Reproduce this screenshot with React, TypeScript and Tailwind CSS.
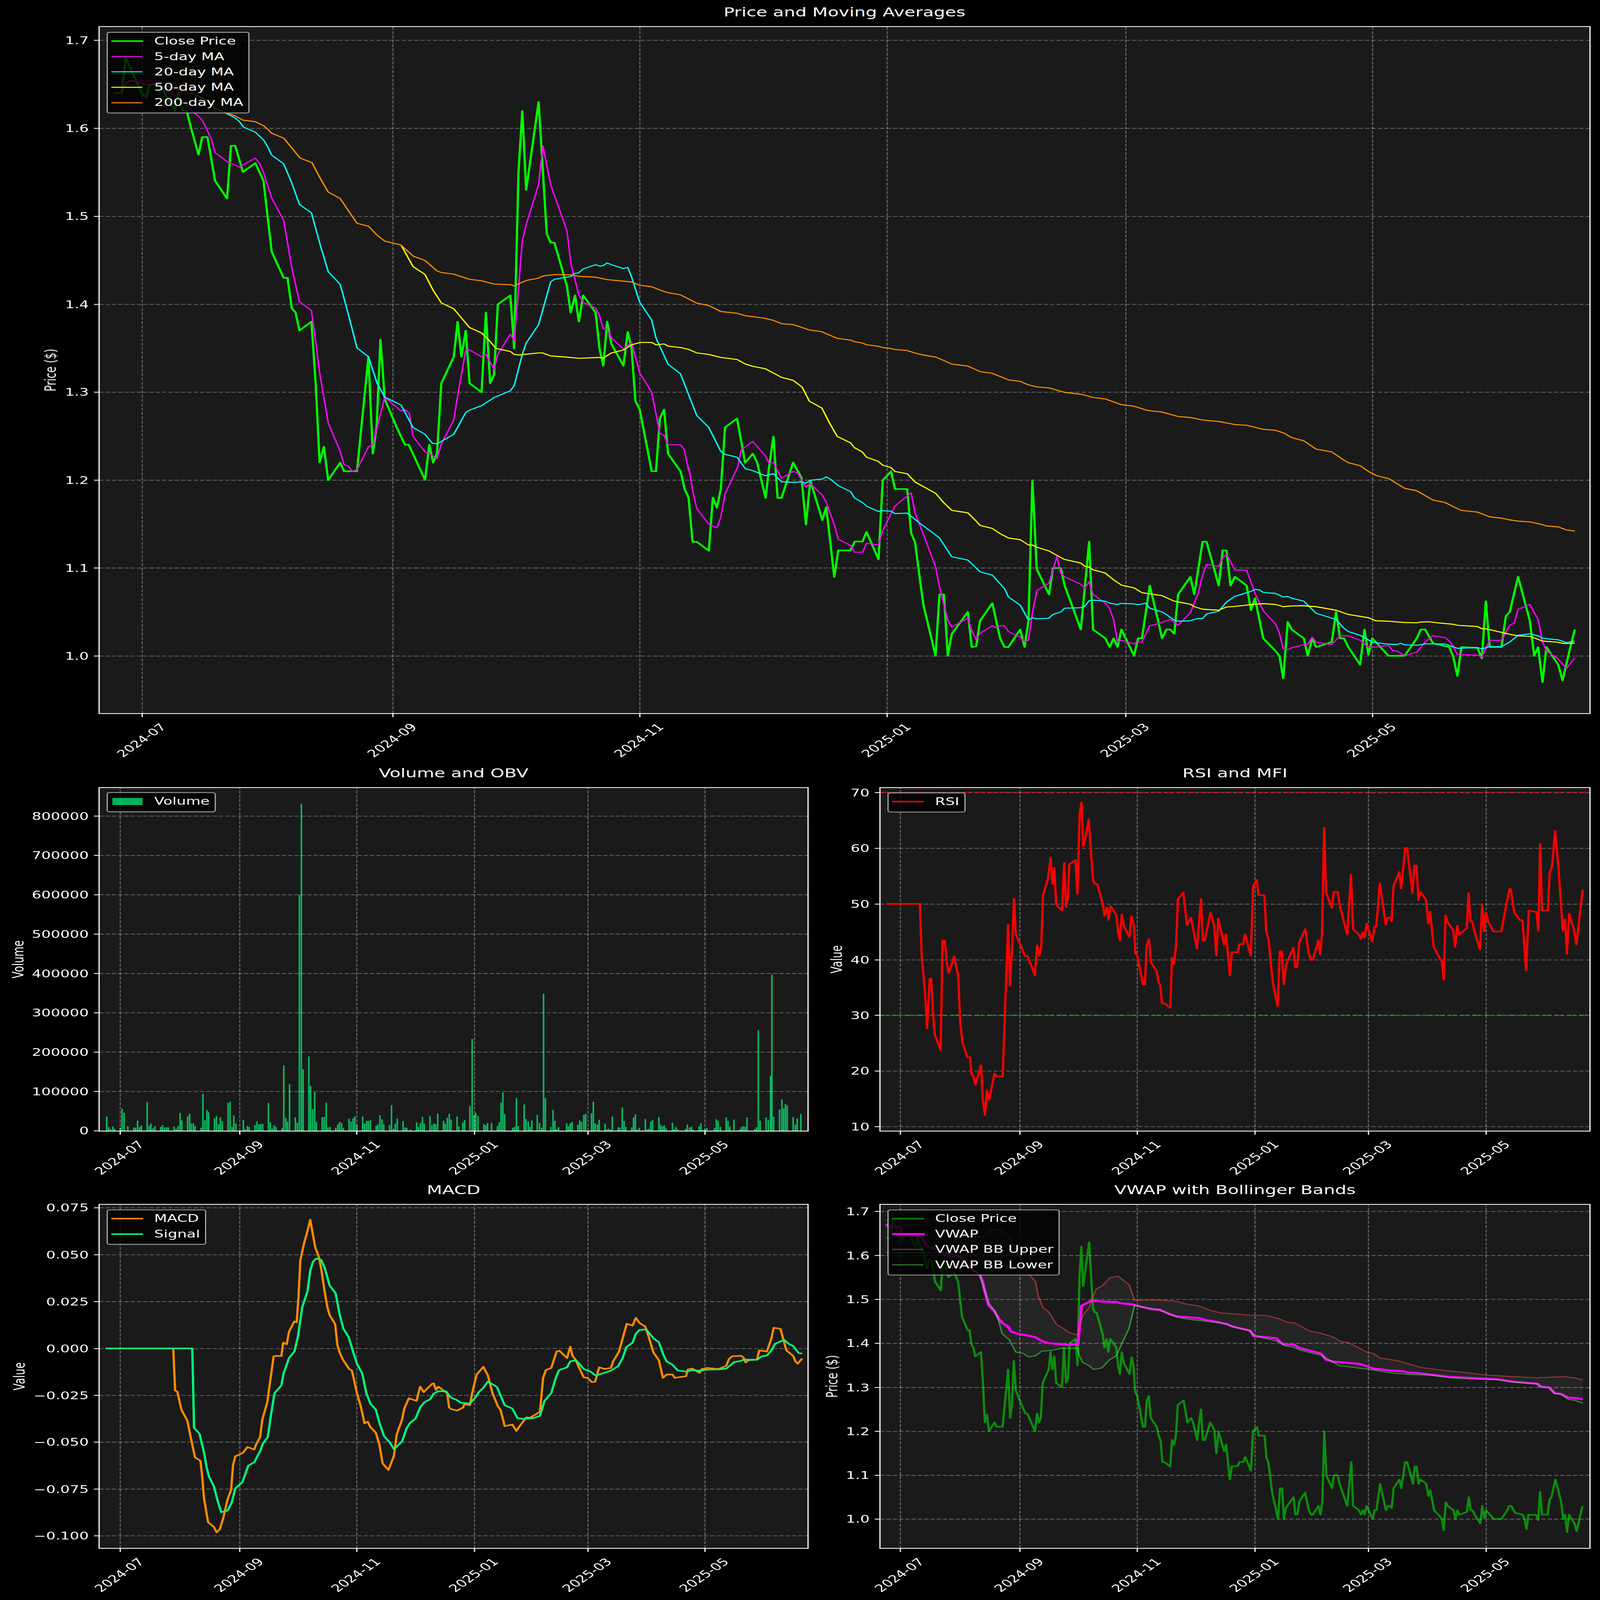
import type { ReactNode } from 'react';

// reads taken from the crops, as flat x,y lists, mapped back to page pixels
const toPage = (ox: number, oy: number, sx: number, sy: number, a: number[]) => {
  const out: number[] = [];
  for (let i = 0; i < a.length; i += 2) out.push(ox + a[i] / sx, oy + a[i + 1] / sy);
  return out;
};
const z1 = (a: number[]) => toPage(0, 0, 1.568, 2.24, a);
const z6 = (a: number[]) => toPage(277, 108, 0.7467, 0.825, a);
const z7 = (a: number[]) => toPage(2300, 1300, 0.7317, 0.98, a);
const z12 = (a: number[]) => toPage(1800, 1900, 2.24, 3, a);
const zRight = (y: number, a: number[]) => toPage(2459, y, 0.7903, 1.12, a);
const zLeft = (y: number, a: number[]) => toPage(277, y, 0.7915, 1.12, a);

const CLOSE = [
  ...z1([497,848,533,848,551,525,580,660,620,845,640,890,657,768,700,768,730,880,765,1010,782,845,800,1008,818,1008,835,1150,870,1410]),
  ...z6([215,371,226,371,242,518,267,577,275,400,284,400,300,488,326,458,343,518,360,755,385,843,393,843,402,945,410,960,418,1020,443,990,452,1200,460,1462,469,1410,478,1522,503,1463,511,1492,538,1492,562,1108,571,1433,579,1345,587,1050,596,1250,621,1345,638,1403,646,1403,680,1521,689,1403,697,1463,705,1433,714,1197,740,1108,748,990,756,1108,765,1020,773,1197,798,1227,807,960,816,1197,824,1168,832,932,858,902,866,1080,875,490,883,283,891,548,917,253,934,695,942,725,950,725,976,870,984,960,993,902,1001,990,1010,902,1036,960,1044,1080,1052,1138,1060,990,1069,1065,1094,1138,1103,1025,1111,1080,1119,1256,1128,1285,1153,1492,1162,1492,1170,1315,1179,1285,1187,1433,1213,1492]),
  ...z12([228,45,253,265,278,372,303,910,329,910,405,1020,430,370,455,495,480,265]),
  ...z6([1306,1345,1331,1315,1348,1463,1364,1433,1373,1463]),
  ...z12([760,375,782,0]),
  ...z6([1407,1375]),
  ...z12([835,375,860,375]),
  ...z6([1448,1463]),
  ...z12([985,130,1013,700,1040,160,1115,645,1140,487,1190,1340,1215,1015,1292,1015,1318,907,1367,907,1392,790,1467,1125]),
  ...z7([122,640,139,605,147,675,172,675,180,850,188,887,197,1020,205,1135,230,1340,238,1095,247,1095,255,1340,263,1253,296,1165,304,1305,313,1302,321,1200,346,1130,362,1270,371,1305,379,1305,403,1235,412,1305,420,1200,428,640,437,995,462,1095,470,990,486,990,494,1060,527,1235,544,885,552,1235,577,1270,586,1305,594,1270,602,1305,610,1235,636,1340,644,1270,652,1270,668,1060,685,1200,693,1270,702,1235,710,1235,718,1252,726,1095,751,1025,759,1095,776,885,784,885,809,1060,817,920,825,920,833,1060,842,1025,866,1060,875,1158,883,1110,900,1270,925,1320,933,1340,941,1430,950,1205,958,1235,983,1270,991,1340,1000,1270,1008,1305,1040,1285,1049,1165,1057,1270,1065,1270,1074,1305,1098,1375,1107,1235,1115,1335,1123,1270,1156,1340,1189,1340,1214,1270,1222,1235,1231,1235,1247,1290,1280,1305,1288,1340,1297,1420,1305,1305,1338,1308,1347,1350,1355,1122,1363,1305,1387,1305,1396,1182,1404,1165,1421,1025,1445,1200,1454,1340,1462,1305,1471,1445,1479,1305,1503,1375,1512,1438,1528,1305,1537,1235]),
];

const MA5 = [
  ...z1([497,848,533,848,551,768,569,735,620,735,640,745,657,728,680,755,730,825,765,872,782,865,800,930,835,1000,870,1060,888,1100,925,1260,942,1390,995,1472,1048,1522,1118,1440]),
  ...z6([335,460,343,490,360,575,385,650,393,725,402,810,418,923,443,953,452,1060,460,1160,478,1330,503,1425,511,1470,520,1475,528,1492,538,1487,562,1410,571,1403,580,1345,596,1243,630,1290,638,1285,647,1297,655,1375,680,1427,689,1432,705,1450,714,1400,740,1320,748,1240,765,1085,773,1085,798,1108,807,1100,824,1150,832,1100,858,1032,866,1055,875,880,883,720,891,665,917,530,926,400,942,530,976,685,985,800,1001,900,1010,925,1036,945,1044,970,1052,1015,1060,1015,1069,1045,1094,1082,1111,1060,1128,1162,1153,1227,1170,1365,1179,1372,1187,1403,1213,1403,1221,1420,1230,1490]),
  ...z12([280,0,303,280,329,505,405,695,455,740,480,610,506,330,585,0]),
  ...z6([1340,1420,1364,1392,1390,1440,1398,1465,1407,1463]),
  ...z12([860,135,935,50,960,72,1013,245,1040,200,1115,340,1140,430,1190,700,1215,880,1292,955,1318,1038,1367,1038,1392,927,1467,950]),
  ...z7([122,840,147,743,180,690,188,770,205,855,230,985,238,1065,247,1135,255,1197,263,1225,296,1190,304,1240,313,1275,321,1250,346,1220,354,1228,362,1220,371,1220,379,1243,403,1265,412,1285,420,1277,428,1170,437,1080,462,1050,478,945,486,1010,494,1025,527,1055,535,1070,544,1045,552,1095,577,1130,586,1152,594,1195,602,1285,610,1278,636,1292,644,1285,652,1285,668,1220,685,1212,710,1195,726,1218,751,1168,767,1090,776,1020,784,975,809,983,817,950,825,935,842,998,866,998,883,1090,900,1160,925,1213,933,1250,941,1312,950,1315,958,1308,983,1295,991,1295,1000,1265,1008,1285,1040,1295,1057,1260,1074,1260,1098,1278,1115,1305,1132,1305,1156,1298,1165,1320,1173,1320,1189,1340,1214,1325,1231,1285,1247,1260,1272,1267,1280,1280,1288,1300,1297,1335,1338,1337,1347,1345,1363,1278,1387,1278,1404,1218,1413,1210,1421,1155,1445,1135,1462,1195,1471,1285,1479,1320,1503,1352,1520,1390,1537,1348]),
];

const MA20 = [
  ...z1([960,1005,990,1030,1030,1075,1048,1105,1067,1158,1118,1203,1155,1275,1175,1345,1190,1412,1243,1492]),
  ...z6([402,525,418,597,443,625,460,725,478,822,503,865,520,965,538,1078,562,1108,580,1197,596,1243,630,1270,655,1345,680,1368,695,1398,705,1400,740,1368,765,1295,773,1287,798,1272,824,1245,858,1222,866,1205,883,1100,891,1062,917,1000,942,857,950,848,985,838,993,828,1001,826,1010,813,1036,799,1044,804,1052,802,1060,793,1069,799,1094,812,1103,808,1111,840,1128,925,1153,985,1162,1045,1187,1133,1213,1165,1247,1305,1272,1345,1297,1425,1306,1435,1331,1445,1348,1483,1364,1490,1390,1507,1407,1500]),
  ...z12([860,178,940,185,985,178,1013,195,1040,158,1115,145,1140,118,1165,145,1215,225,1292,298,1317,375,1365,430,1395,478,1467,540,1492,530,1545,537]),
  ...z7([147,773,172,771,197,810,238,870,263,945,296,958,321,1005,346,1018,371,1072,379,1105,403,1138,420,1197,428,1188,437,1192,462,1190,470,1175,486,1165,494,1150,527,1148,535,1143,544,1120,552,1118,577,1122,586,1130,602,1135,610,1131,636,1133,644,1136,660,1130,668,1150,693,1165,702,1175,718,1198,726,1202,751,1200,759,1195,767,1191,776,1191,784,1173,809,1162,825,1125,842,1103,875,1083,883,1075,892,1077,900,1087,925,1091,941,1105,950,1103,958,1110,983,1122,1008,1170,1049,1195,1065,1230,1074,1243,1098,1258,1123,1285,1148,1292,1173,1295,1181,1290,1189,1296,1214,1298,1231,1292,1247,1292,1272,1293,1297,1310,1338,1307,1347,1312,1363,1303,1387,1303,1404,1285,1421,1258,1445,1252,1462,1260,1471,1270,1503,1276,1520,1287,1537,1281]),
];

const MA50 = [
  ...z6([630,733,655,805,680,832,697,885,714,927,740,947,773,1010,798,1028,815,1055,828,1080,858,1090,866,1100,875,1102,917,1095,925,1095,942,1105,975,1109,1001,1113,1044,1110,1052,1112,1069,1095,1094,1085,1111,1068,1128,1060,1153,1060,1162,1068,1179,1065,1187,1072,1213,1077,1230,1083,1247,1095,1272,1100,1297,1110,1331,1117,1348,1132,1364,1140,1390,1148,1424,1177,1448,1187,1467,1210,1482,1257,1508,1280,1524,1330,1540,1375,1568,1397]),
  ...z7([64,510,80,527,89,548,113,565,122,580,139,590,147,605,172,614,188,647,230,692,247,730,263,760,296,770,313,803,321,820,346,832,362,853,379,870,403,877,420,898,428,898,437,907,462,922,486,948,494,956,527,970,535,983,544,986,552,997,577,1010,594,1037,610,1058,636,1069,652,1088,693,1100,718,1122,751,1134,759,1144,776,1154,809,1158,825,1145,842,1143,883,1134,900,1132,925,1135,941,1144,958,1141,983,1140,991,1142,1008,1144,1049,1158,1074,1175,1115,1188,1130,1200,1156,1202,1189,1207,1214,1208,1222,1205,1239,1204,1255,1208,1288,1214,1297,1218,1338,1223,1347,1232,1355,1232,1404,1254,1421,1260,1445,1262,1471,1281,1503,1286,1512,1290,1520,1291,1537,1289]),
];

const MA200 = [
  ...z1([497,848,533,848,551,768,569,735,620,755,640,773,700,773,730,790,765,808,785,815,870,875,905,915,925,950,940,985,990,1028,1030,1055,1065,1095,1118,1108,1155,1145,1170,1172,1190,1213,1243,1258,1315,1440,1367,1482]),
  ...z6([460,505,478,555,503,577,538,660,562,670,580,700,596,720,630,733,655,770,680,785,705,820,714,825,740,831,773,848,798,853,824,864,858,866,866,870,891,852,917,844,926,837,950,832,985,833,1001,838,1036,841,1060,849,1111,857,1128,868,1153,873,1170,884,1187,893,1213,900,1247,928,1272,936,1297,956,1331,962,1348,970,1390,979,1407,986,1424,997,1448,1000,1482,1018,1508,1024,1540,1046,1568,1052]),
  ...z7([64,88,80,93,89,100,113,106,122,111,139,115,147,119,172,123,188,133,205,141,230,149,247,163,263,177,296,185,321,207,346,214,379,240,403,246,420,260,437,268,462,272,494,290,527,297,552,310,577,316,610,339,636,345,660,360,668,363,693,368,726,386,751,390,776,400,809,406,842,418,866,421,900,437,925,441,941,451,958,470,983,483,1008,516,1040,527,1065,560,1074,570,1098,582,1115,605,1132,622,1156,633,1189,672,1214,682,1247,719,1272,729,1304,760,1338,767,1363,786,1387,791,1404,798,1421,803,1445,806,1462,813,1479,822,1503,826,1520,838,1537,843]),
];

const RSI = zRight(3203, [14,530,88,530,92,760,100,950,104,1097,110,870,113,870,117,1020,121,1125,134,1195,138,697,143,697,148,805,152,845,164,768,173,865,177,1065,182,1160,193,1228,199,1228,202,1303,206,1315,211,1354,223,1265,227,1420,232,1492,236,1378,241,1423,253,1302,258,1316,271,1316,279,850,283,625,287,903,292,720,296,506,300,670,312,725,320,767,326,767,342,855,347,718,352,767,356,725,360,490,371,415,377,318,381,440,385,365,389,533,402,560,407,343,411,545,415,500,418,350,432,330,436,485,441,120,445,68,449,268,453,235,461,145,467,325,471,428,476,440,480,440,492,530,496,584,501,545,505,603,509,540,522,580,526,660,530,697,534,578,539,632,551,681,555,586,561,630,564,755,568,765,581,897,585,897,589,718,594,690,598,795,611,835,615,885,619,900,623,983,628,983,641,1003,645,775,649,803,654,720,658,507,670,478,678,627,687,592,700,733,709,507,713,697,717,697,730,570,738,627,743,765,747,597,760,715,764,668,773,857,777,750,790,750,794,713,802,713,806,668,819,765,824,450,832,420,836,490,849,490,853,655,858,690,864,820,868,890,878,997,883,745,887,745,892,897,897,805,913,730,917,820,921,818,926,705,939,645,947,755,952,785,956,785,968,695,972,760,976,675,981,183,985,478,998,548,1002,475,1011,475,1015,535,1032,670,1040,397,1045,645,1058,670,1062,690,1066,660,1070,685,1075,620,1087,702,1092,633,1096,633,1104,435,1117,625,1121,592,1126,592,1130,610,1134,450,1147,385,1151,460,1160,275,1164,275,1176,482,1180,355,1185,355,1189,512,1194,475,1206,512,1211,620,1215,565,1219,650,1223,727,1241,795,1245,876,1249,582,1254,615,1266,650,1270,725,1275,628,1279,670,1296,640,1300,480,1304,610,1308,610,1313,655,1325,738,1330,535,1334,655,1338,568,1343,610,1355,656,1372,656,1390,462,1393,462,1401,570,1414,605,1419,605,1427,833,1433,560,1450,567,1454,652,1458,256,1462,560,1475,560,1479,388,1484,362,1491,197,1499,380,1508,652,1513,600,1517,757,1522,574,1533,650,1538,715,1547,550,1552,465]);

const MACD = zLeft(4898, [14,656,164,656,168,848,173,853,182,935,195,985,203,1065,212,1152,224,1168,228,1240,232,1340,241,1448,254,1470,260,1494,267,1480,275,1425,284,1345,292,1300,296,1190,301,1148,318,1132,328,1105,343,1117,348,1090,356,1060,361,980,372,900,378,810,386,692,390,690,403,691,407,630,415,637,420,580,432,533,437,537,441,420,445,255,453,180,461,120,467,70,473,140,478,195,486,240,491,290,499,400,505,470,510,505,522,545,527,640,532,675,540,710,553,750,559,757,565,810,570,860,578,915,582,950,587,998,594,990,600,1015,612,1040,620,1095,627,1180,640,1210,652,1145,658,1050,670,980,675,930,685,883,702,895,710,830,718,855,736,818,740,815,745,845,750,830,770,860,774,925,779,933,792,939,805,925,808,910,820,915,825,860,835,775,850,740,860,780,870,860,882,920,888,937,897,1010,914,1003,923,1032,930,1010,945,970,953,972,975,945,982,790,988,755,1000,745,1012,670,1018,667,1035,700,1042,648,1047,690,1053,705,1063,750,1072,788,1080,790,1090,810,1097,808,1106,742,1118,750,1132,745,1137,715,1150,670,1162,580,1167,544,1180,552,1187,517,1195,540,1208,557,1215,600,1226,675,1238,710,1247,790,1255,775,1268,775,1273,790,1298,783,1302,752,1312,748,1328,768,1333,750,1345,745,1370,750,1387,735,1393,705,1400,692,1420,690,1425,697,1430,720,1437,710,1455,707,1460,665,1477,670,1487,610,1492,562,1507,567,1512,605,1520,665,1535,690,1540,715,1545,726,1555,702]);

const SIGNAL = zLeft(4898, [14,656,206,656,210,1018,222,1045,232,1130,238,1200,243,1240,254,1285,262,1350,270,1402,284,1395,293,1360,301,1295,317,1265,330,1190,343,1175,357,1120,362,1090,373,1060,380,960,388,860,403,825,408,770,420,700,432,670,440,600,449,470,461,395,467,300,473,262,480,247,491,252,499,290,510,370,523,405,532,500,540,565,552,605,560,660,570,725,582,770,591,860,600,908,612,935,620,995,630,1055,643,1085,652,1115,660,1100,670,1080,680,1020,688,995,700,975,710,925,720,900,732,888,740,862,750,851,767,851,778,880,790,890,800,904,820,907,832,880,840,855,850,835,860,807,880,832,897,915,914,930,925,973,935,977,960,974,975,963,985,895,1000,860,1010,790,1017,755,1035,742,1042,715,1055,710,1072,750,1087,762,1098,780,1118,767,1132,757,1148,737,1158,700,1166,650,1180,630,1187,590,1195,572,1210,570,1227,612,1238,628,1247,680,1255,715,1268,730,1280,757,1300,762,1312,755,1330,758,1345,753,1370,752,1387,748,1405,718,1420,713,1425,707,1455,708,1465,693,1477,688,1487,665,1495,635,1515,617,1525,635,1535,645,1547,677,1555,680]);

const VWAP = zRight(4898, [14,90,20,103,45,103,50,142,75,143,93,152,104,192,130,210,140,220,175,236,205,300,220,318,227,355,232,400,240,460,252,485,262,520,270,540,283,557,290,580,305,590,320,595,343,605,360,625,372,632,415,640,437,637,445,462,467,439,497,443,523,445,530,450,555,455,580,468,600,478,618,480,640,500,655,510,705,518,720,527,745,535,765,545,778,556,818,575,825,600,840,603,875,610,890,637,915,640,925,653,975,680,985,708,1000,716,1040,723,1060,727,1090,748,1130,757,1155,760,1165,766,1185,768,1215,775,1255,785,1340,795,1360,796,1400,808,1440,815,1453,817,1458,830,1478,834,1490,860,1503,863,1520,880,1540,883,1552,888]);

const BB_UPPER = zRight(4898, [14,71,130,71,150,95,175,105,190,130,205,148,225,148,245,118,262,113,285,145,300,205,327,315,343,350,350,420,360,470,373,490,390,548,405,565,420,586,437,595,440,560,448,505,462,470,470,420,478,385,492,370,507,335,526,327,537,345,550,365,562,437,600,435,650,440,680,455,705,463,730,483,755,495,790,500,820,505,850,505,880,520,900,537,915,540,950,578,970,585,1000,603,1015,622,1035,630,1075,673,1090,680,1105,700,1145,713,1195,743,1240,755,1300,768,1340,778,1400,785,1453,790,1480,787,1510,785,1535,790,1552,800]);

const BB_LOWER = zRight(4898, [14,221,130,221,150,238,175,240,205,300,220,318,240,450,255,490,262,530,270,590,285,615,300,673,317,680,328,695,343,690,358,668,380,665,400,655,437,656,440,690,448,720,462,735,472,752,490,745,507,708,522,690,535,630,550,565,562,460,580,467,618,482,655,513,680,523,720,532,765,545,780,558,818,577,825,595,850,610,880,625,895,645,912,650,930,665,975,688,1000,718,1015,735,1075,750,1130,768,1170,775,1215,778,1260,790,1310,796,1360,798,1400,810,1450,817,1458,830,1478,836,1490,862,1505,866,1520,888,1535,893,1552,906]);

// same close series, rescaled from the top axes to the VWAP axes
const CLOSE_VWAP = CLOSE.map((v, i) =>
  i % 2 === 0 ? 2516 + (v - 397.5) * 0.47615 : 4926.6 + (v - 164) * 0.49976,
);

const VOLUME_BARS = [
  ...toPage(200, 4200, 1.425, 3, [140,1023,148,1150,155,1177,164,1144,171,1168,194,1159,201,925,209,975,224,1141,248,1156,255,1158,263,1072,271,1152,278,1129,301,844,309,1135,316,1108,324,1165,332,1141,355,1150,362,1129,370,1156,378,1153,385,1156,408,1144,416,1171,424,1138,432,979,439,1069,462,1018,470,988,477,1108,485,1105,492,1138,516,1159,523,745,531,1066,539,946,546,970,569,1042,577,1015,585,1117,592,1033,600,1078,623,856,631,841,639,1150,646,1009,654,1105,684,1066,691,1177,700,1138,707,1150,730,1126,738,1084,746,1117,753,1114,761,1111,784,856,791,1093,799,1168,807,1129,814,1150,838,1165,845,397,853,1039,860,1087,868,628,891,1033,899,1096,907,-1683,915,-2793,922,445,945,289,952,649,960,931,968,724,975,1090,998,1030,1006,1027,1014,853,1021,1156,1029,1150,1052,1159,1060,1120,1067,1090,1075,1099,1082,1162,1105,1048,1113,1084,1121,1045,1128,1021,1136,1123,1159,1021,1167,1105,1175,1075,1182,1075,1190,1066,1213,1135,1220,1117,1228,1006,1236,1057,1243,1117,1266,1126,1274,883,1282,1171,1289,1108,1297,1048,1320,1078,1328,1156,1335,1162,1350,1180,1374,1093,1381,1150,1389,1102,1397,1027,1404,1108,1427,1018,1435,1129,1443,1108,1450,1114,1458,985,1481,1075,1488,1111,1496,1036,1504,988,1511,1060,1535,1021,1542,1144,1558,1096,1565,1063]),
  ...toPage(277, 3900, 0.7915, 2.24, [820,1340,825,728,829,1420,833,1402,838,1432,851,1505,855,1515,859,1495,868,1495,881,1522,885,1488,889,1310,893,1216,897,1413,915,1537,919,1530,923,1267,927,1523,940,1325,944,1458,949,1480,953,1530,957,1472,969,1420,974,1495,979,1537,983,315,987,1268,999,1530,1004,1375,1008,1474,1012,1550,1016,1532,1034,1495,1038,1522,1042,1496,1046,1483,1059,1510,1063,1472,1067,1483,1072,1420,1076,1410,1089,1405,1093,1300,1097,1496,1102,1508,1106,1465,1119,1500,1123,1552,1127,1547,1131,1555,1135,1435,1148,1532,1152,1537,1157,1354,1161,1476,1165,1530,1178,1535,1182,1443,1186,1416,1190,1552,1195,1538,1208,1458,1212,1552,1216,1548,1220,1483,1224,1468,1238,1440,1242,1510,1246,1525,1250,1517,1254,1543,1268,1492,1272,1552,1276,1532,1280,1552,1297,1547,1301,1508,1306,1535,1310,1528,1314,1558,1327,1525,1331,1496,1335,1556,1340,1548,1344,1540,1361,1540,1365,1460,1369,1474,1374,1530,1387,1443,1391,1474,1395,1528,1404,1463,1417,1550,1421,1530,1425,1523,1429,1530,1433,1445,1450,1548,1454,1533,1458,650,1462,1472,1475,1445,1480,1467,1485,1066,1488,141,1492,1436,1505,1370,1510,1280,1514,1362,1518,1320,1522,1335,1535,1440,1540,1508,1544,1452,1552,1412]),
];

const pointsOf = (a: number[]) => {
  const parts: string[] = [];
  for (let i = 0; i < a.length; i += 2) parts.push(`${a[i].toFixed(1)},${a[i + 1].toFixed(1)}`);
  return parts.join(' ');
};

const BB_BAND = [...BB_UPPER];
for (let i = BB_LOWER.length - 2; i >= 0; i -= 2) BB_BAND.push(BB_LOWER[i], BB_LOWER[i + 1]);

const MONTHS = ['2024-07', '2024-09', '2024-11', '2025-01', '2025-03', '2025-05'];
const TICKS_TOP = [397.5, 1098, 1788, 2479, 3146, 3835.5];
const TICKS_LEFT = [336, 670, 997, 1326, 1643, 1970];
const TICKS_RIGHT = [2516, 2850, 3178, 3507, 3824, 4153];

const PRICE_TOP: [number, string][] = [[164, '1.7'], [522, '1.6'], [880, '1.5'], [1238, '1.4'], [1595, '1.3'], [1953, '1.2'], [2310, '1.1'], [2668, '1.0']];
const VOLUME_Y: [number, string][] = [[3319, '800000'], [3479, '700000'], [3639, '600000'], [3799, '500000'], [3959, '400000'], [4119, '300000'], [4279, '200000'], [4439, '100000'], [4599, '0']];
const RSI_Y: [number, string][] = [[3223.5, '70'], [3450, '60'], [3677, '50'], [3904, '40'], [4129, '30'], [4356, '20'], [4582, '10']];
const MACD_Y: [number, string][] = [[4912, '0.075'], [5103, '0.050'], [5293.5, '0.025'], [5484.6, '0.000'], [5675, '−0.025'], [5865, '−0.050'], [6056, '−0.075'], [6246, '−0.100']];
const PRICE_VWAP: [number, string][] = [[4926.6, '1.7'], [5106, '1.6'], [5284.6, '1.5'], [5463, '1.4'], [5643, '1.3'], [5821, '1.2'], [6000, '1.1'], [6178, '1.0']];

type LegendItem = { label: string; swatch: string };

function Legend({ items, place }: { items: LegendItem[]; place: string }) {
  return (
    <div className={`absolute ${place} flex flex-col rounded-[8px] border-[3px] border-white/70 bg-black/80 pt-[3px] pb-[9px] pl-[10px] pr-[14px]`}>
      {items.map((it) => (
        <div key={it.label} className="flex h-[62.6px] items-center text-[41.67px] text-white">
          <div className="flex w-[120px] shrink-0 items-center">
            <div className={it.swatch} />
          </div>
          <span className="whitespace-nowrap">{it.label}</span>
        </div>
      ))}
    </div>
  );
}

type Axes = { l: number; r: number; t: number; b: number };

function Chart(props: {
  box: string;
  titleBox: string;
  title: string;
  view: [number, number, number, number];
  ax: Axes;
  xTicks: number[];
  yTicks: [number, string][];
  yLabel: string;
  yLabelX: number;
  legend: ReactNode;
  under?: ReactNode;
  children: ReactNode;
}) {
  const { ax, view } = props;
  const midY = (ax.t + ax.b) / 2;
  return (
    <div className={`relative ${props.box}`}>
      <div className={`flex h-[108px] items-end justify-center pb-[33px] text-[50px] leading-[50px] text-white ${props.titleBox}`}>
        {props.title}
      </div>
      <svg className="block overflow-visible" width={view[2]} height={view[3]} viewBox={view.join(' ')}>
        <rect x={ax.l} y={ax.t} width={ax.r - ax.l} height={ax.b - ax.t} fill="#1a1a1a" />
        {props.under}
        <g stroke="#ffffff" strokeOpacity={0.3} strokeWidth={3.33} strokeDasharray="12.3 5.3">
          {props.xTicks.map((x) => (
            <line key={x} x1={x} x2={x} y1={ax.b} y2={ax.t} />
          ))}
          {props.yTicks.map(([y]) => (
            <line key={y} x1={ax.l} x2={ax.r} y1={y} y2={y} />
          ))}
        </g>
        {props.children}
        <rect x={ax.l} y={ax.t} width={ax.r - ax.l} height={ax.b - ax.t} fill="none" stroke="#ffffff" strokeWidth={3.33} />
        <g stroke="#ffffff" strokeWidth={3.33}>
          {props.xTicks.map((x) => (
            <line key={x} x1={x} x2={x} y1={ax.b} y2={ax.b + 14.6} />
          ))}
          {props.yTicks.map(([y]) => (
            <line key={y} x1={ax.l - 14.6} x2={ax.l} y1={y} y2={y} />
          ))}
        </g>
        <g fill="#ffffff" fontSize={41.67}>
          {props.xTicks.map((x, i) => (
            <text key={x} x={x - 3} y={ax.b + 108} dy={15} textAnchor="middle" transform={`rotate(-45 ${x - 3} ${ax.b + 108})`}>
              {MONTHS[i]}
            </text>
          ))}
          {props.yTicks.map(([y, label]) => (
            <text key={y} x={ax.l - 29} y={y} dy={15} textAnchor="end">
              {label}
            </text>
          ))}
          <text x={props.yLabelX} y={midY} textAnchor="middle" transform={`rotate(-90 ${props.yLabelX} ${midY})`} dy={15}>
            {props.yLabel}
          </text>
        </g>
      </svg>
      {props.legend}
    </div>
  );
}

function Line({ pts, color, width, opacity = 1 }: { pts: number[]; color: string; width: number; opacity?: number }) {
  return (
    <polyline points={pointsOf(pts)} fill="none" stroke={color} strokeWidth={width} strokeOpacity={opacity} strokeLinejoin="round" />
  );
}

export default function App() {
  const volumeBars: { x: number; y: number }[] = [];
  for (let i = 0; i < VOLUME_BARS.length; i += 2) volumeBars.push({ x: VOLUME_BARS[i], y: VOLUME_BARS[i + 1] });

  // the window can be smaller than the figure (it came up 4096x4096), fit the whole figure in it
  const sx = Math.min(1, window.innerWidth / 4471);
  const sy = Math.min(1, window.innerHeight / 6507);

  return (
    <div className="overflow-hidden bg-black" style={{ width: 4471 * sx, height: 6507 * sy }}>
      <div
        className="flex h-[6507px] w-[4471px] origin-top-left flex-col bg-black font-['DejaVu_Sans',sans-serif]"
        style={{ transform: `scale(${sx}, ${sy})` }}
      >
        <Chart
          box="h-[3095px] w-[4471px]"
          titleBox="ml-[277px] w-[4166px]"
          title="Price and Moving Averages"
          view={[0, 108, 4471, 2987]}
          ax={{ l: 277, r: 4443, t: 108, b: 2902 }}
          xTicks={TICKS_TOP}
          yTicks={PRICE_TOP}
          yLabel="Price ($)"
          yLabelX={141}
          legend={
            <Legend
              place="left-[298px] top-[130px]"
              items={[
                { label: 'Close Price', swatch: 'h-[6px] w-[89px] bg-[#00ff00]' },
                { label: '5-day MA', swatch: 'h-[4px] w-[87px] bg-[#ff00ff]' },
                { label: '20-day MA', swatch: 'h-[4px] w-[87px] bg-[#00ffff]' },
                { label: '50-day MA', swatch: 'h-[4px] w-[87px] bg-[#ffff00]' },
                { label: '200-day MA', swatch: 'h-[4px] w-[87px] bg-[#ff8c00]' },
              ]}
            />
          }
        >
          <Line pts={CLOSE} color="#00ff00" width={6.25} />
          <Line pts={MA5} color="#ff00ff" width={4.17} />
          <Line pts={MA20} color="#00ffff" width={4.17} />
          <Line pts={MA50} color="#ffff00" width={4.17} />
          <Line pts={MA200} color="#ff8c00" width={4.17} />
        </Chart>

        <div className="flex h-[1695px]">
          <Chart
            box="h-[1695px] w-[2290px]"
            titleBox="ml-[277px] w-[1981px]"
            title="Volume and OBV"
            view={[0, 3203, 2290, 1587]}
            ax={{ l: 277, r: 2258, t: 3203, b: 4600 }}
            xTicks={TICKS_LEFT}
            yTicks={VOLUME_Y}
            yLabel="Volume"
            yLabelX={50}
            legend={
              <Legend place="left-[298px] top-[127px]" items={[{ label: 'Volume', swatch: 'h-[29px] w-[84px] ml-[3px] bg-[#00ff7f]/70' }]} />
            }
            under={
              <g fill="#00ff7f" fillOpacity={0.7}>
                {volumeBars.map((b, i) => (
                  <rect key={i} x={b.x - 2.15} y={b.y} width={4.3} height={4600 - b.y} />
                ))}
              </g>
            }
          >
            {null}
          </Chart>
          <Chart
            box="h-[1695px] w-[2181px]"
            titleBox="ml-[169px] w-[1984px]"
            title="RSI and MFI"
            view={[2290, 3203, 2181, 1587]}
            ax={{ l: 2459, r: 4443, t: 3203, b: 4600 }}
            xTicks={TICKS_RIGHT}
            yTicks={RSI_Y}
            yLabel="Value"
            yLabelX={2337}
            legend={<Legend place="left-[190px] top-[128px]" items={[{ label: 'RSI', swatch: 'h-[6px] w-[89px] bg-[#ff0000]' }]} />}
          >
            <line x1={2459} x2={4443} y1={3223.5} y2={3223.5} stroke="#ff0000" strokeOpacity={0.5} strokeWidth={6.25} strokeDasharray="23.1 10" />
            <line x1={2459} x2={4443} y1={4129} y2={4129} stroke="#00ff00" strokeOpacity={0.3} strokeWidth={6.25} strokeDasharray="23.1 10" />
            <Line pts={RSI} color="#ff0000" width={6.25} />
          </Chart>
        </div>

        <div className="flex h-[1717px]">
          <Chart
            box="h-[1717px] w-[2290px]"
            titleBox="ml-[277px] w-[1981px]"
            title="MACD"
            view={[0, 4898, 2290, 1609]}
            ax={{ l: 277, r: 2258, t: 4898, b: 6297 }}
            xTicks={TICKS_LEFT}
            yTicks={MACD_Y}
            yLabel="Value"
            yLabelX={54}
            legend={
              <Legend
                place="left-[298px] top-[129px]"
                items={[
                  { label: 'MACD', swatch: 'h-[6px] w-[89px] bg-[#ff8c00]' },
                  { label: 'Signal', swatch: 'h-[6px] w-[89px] bg-[#00ff7f]' },
                ]}
              />
            }
          >
            <Line pts={MACD} color="#ff8c00" width={6.25} />
            <Line pts={SIGNAL} color="#00ff7f" width={6.25} />
          </Chart>
          <Chart
            box="h-[1717px] w-[2181px]"
            titleBox="ml-[169px] w-[1984px]"
            title="VWAP with Bollinger Bands"
            view={[2290, 4898, 2181, 1609]}
            ax={{ l: 2459, r: 4443, t: 4898, b: 6297 }}
            xTicks={TICKS_RIGHT}
            yTicks={PRICE_VWAP}
            yLabel="Price ($)"
            yLabelX={2325}
            legend={
              <Legend
                place="left-[190px] top-[129px]"
                items={[
                  { label: 'Close Price', swatch: 'h-[6px] w-[89px] bg-[#00ff00]/50' },
                  { label: 'VWAP', swatch: 'h-[8px] w-[91px] bg-[#ff00ff]' },
                  { label: 'VWAP BB Upper', swatch: 'h-[4px] w-[87px] bg-[#8f3535]' },
                  { label: 'VWAP BB Lower', swatch: 'h-[4px] w-[87px] bg-[#2e8b2e]' },
                ]}
              />
            }
          >
            <polygon points={pointsOf(BB_BAND)} fill="#ffffff" fillOpacity={0.05} />
            <Line pts={CLOSE_VWAP} color="#00ff00" width={6.25} opacity={0.5} />
            <Line pts={VWAP} color="#ff00ff" width={8.33} />
            <Line pts={BB_UPPER} color="#ff4d4d" width={4.17} opacity={0.5} />
            <Line pts={BB_LOWER} color="#44ff44" width={4.17} opacity={0.5} />
          </Chart>
        </div>
      </div>
    </div>
  );
}
